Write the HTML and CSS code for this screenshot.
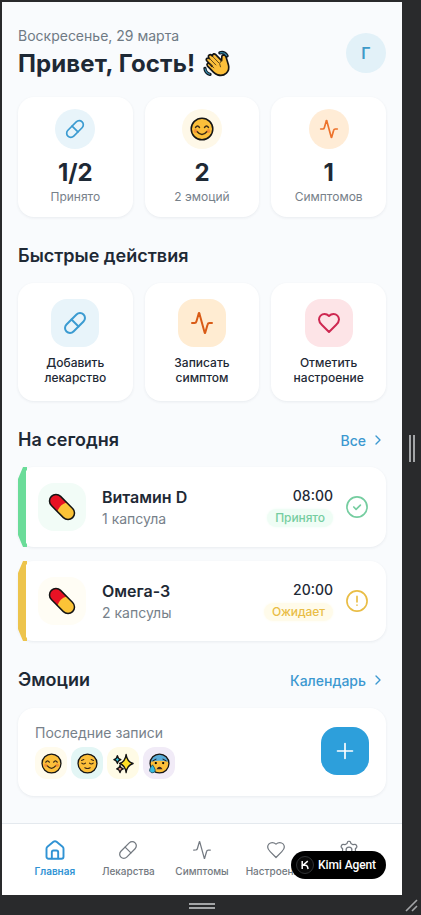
FILE: index.html
```
<!DOCTYPE html>
<html lang="ru">
<head>
<meta charset="utf-8">
<meta name="viewport" content="width=device-width, initial-scale=1">
<title>Дневник здоровья</title>
<link rel="stylesheet" href="styles.css">
</head>
<body>
<svg class="defs" aria-hidden="true">
  <symbol id="pill" viewBox="0 0 24 24"><path d="m10.5 20.5 10-10a4.95 4.95 0 1 0-7-7l-10 10a4.95 4.95 0 1 0 7 7Z"/><path d="m8.5 8.5 7 7"/></symbol>
  <symbol id="activity" viewBox="0 0 24 24"><path d="M22 12h-2.5a2 2 0 0 0-1.9 1.5l-2.4 8.3a.25.25 0 0 1-.5 0L9.3 2.2a.25.25 0 0 0-.5 0l-2.4 8.3A2 2 0 0 1 4.500 12H2"/></symbol>
  <symbol id="heart" viewBox="0 0 24 24"><path d="M19 14c1.500-1.460 3-3.210 3-5.500A5.500 5.500 0 0 0 16.500 3c-1.760 0-3 .5-4.500 2-1.500-1.500-2.740-2-4.500-2A5.500 5.500 0 0 0 2 8.500c0 2.300 1.500 4.050 3 5.500l7 7Z"/></symbol>
  <symbol id="chevron" viewBox="0 0 24 24"><path d="m9 18 6-6-6-6"/></symbol>
  <symbol id="smile" viewBox="0 0 24 24"><circle cx="12" cy="12" r="10.800" fill="#fcbf3a" stroke="#161616" stroke-width="1.500"/><path d="M5.500 10.500q2-3 4 0M14.500 10.500q2-3 4 0M7 14.500q5 6 10 0" fill="none" stroke="#3b2a16" stroke-width="1.400" stroke-linecap="round"/><circle cx="5.500" cy="14" r="1.900" fill="#f07b36" opacity=".65"/><circle cx="18.500" cy="14" r="1.900" fill="#f07b36" opacity=".65"/></symbol>
  <symbol id="capsule" viewBox="0 0 28 28"><g transform="rotate(45 14 14)"><path d="M14 7.500H5.500a6.500 6.500 0 0 0 0 13H14z" fill="#e81224"/><path d="M14 7.500h8.500a6.500 6.500 0 0 1 0 13H14q-3.500-6.500 0-13z" fill="#fbc337"/><rect x="-1" y="7.500" width="30" height="13" rx="6.500" fill="none" stroke="#141414" stroke-width="1.500"/></g></symbol>
</svg>
<div class="frame">
  <main class="screen">
    <div class="content">
      <header class="header">
        <div>
          <p class="date">Воскресенье, 29 марта</p>
          <h1 class="greeting">Привет, Гость!
            <svg class="wave" viewBox="0 0 28 28"><g stroke-linecap="round" stroke-linejoin="round"><path d="M9.500 17 3.800 11.200q-1-1.700.5-2.600 1.300-.7 2.400.4L5.800 7.800q-.8-1.600.6-2.600 1.400-.8 2.600.4l.8.8Q9.500 4.500 11 4q1.200-.2 2.200.8l6.100 6.200.2-4q.2-2 2-2 1.900.1 2.400 2.200l2.500 8.300q1.300 5-2.200 8.500-3.700 3.500-9 1.800-2.400-.8-4.400-2.800l-6.300-6.500q-1-1.500.3-2.500 1.300-.7 2.500.5z" fill="#fcbf3a" stroke="#141414" stroke-width="1.700"/><path d="m7 9 6.300 6.500M9.800 6.500l6.500 6.700M7.300 14.500l4 4M18.800 11q-3 3-.8 6.500" fill="none" stroke="#4c3717" stroke-width=".9"/><path d="M17.500 3q4.500-1.500 7.500 3" fill="none" stroke="#111b24" stroke-width="3.400"/><path d="M2 19q.5 5 5.300 6.300" fill="none" stroke="#111b24" stroke-width="3.400"/><path d="M18 3q4-1 6.500 2.600M2.200 19.500q.8 4.200 4.600 5.500" fill="none" stroke="#3487a8" stroke-width="1.200"/></g></svg>
          </h1>
        </div>
        <div class="avatar">Г</div>
      </header>

      <section class="grid stats">
        <article class="card stat"><div class="bubble blue"><svg class="icon"><use href="#pill"/></svg></div><strong>1/2</strong><span>Принято</span></article>
        <article class="card stat"><div class="bubble cream"><svg class="face"><use href="#smile"/></svg></div><strong>2</strong><span>2 эмоций</span></article>
        <article class="card stat"><div class="bubble peach"><svg class="icon"><use href="#activity"/></svg></div><strong>1</strong><span>Симптомов</span></article>
      </section>

      <div class="section-head actions-head"><h2>Быстрые действия</h2></div>
      <section class="grid actions">
        <article class="card action"><div class="tile blue"><svg class="icon"><use href="#pill"/></svg></div><span>Добавить<br>лекарство</span></article>
        <article class="card action"><div class="tile orange"><svg class="icon"><use href="#activity"/></svg></div><span>Записать<br>симптом</span></article>
        <article class="card action"><div class="tile rose"><svg class="icon"><use href="#heart"/></svg></div><span>Отметить<br>настроение</span></article>
      </section>

      <div class="section-head today-head"><h2>На сегодня</h2><a>Все <svg class="icon"><use href="#chevron"/></svg></a></div>
      <section class="meds">
        <article class="card med taken">
          <div class="med-icon"><svg><use href="#capsule"/></svg></div>
          <div class="med-info"><h3>Витамин D</h3><p>1 капсула</p></div>
          <div class="med-time"><time>08:00</time><span class="badge">Принято</span></div>
          <svg class="icon status" viewBox="0 0 24 24"><circle cx="12" cy="12" r="11"/><path d="m8.500 12 2.500 2.500 4.700-4.600"/></svg>
        </article>
        <article class="card med waiting">
          <div class="med-icon"><svg><use href="#capsule"/></svg></div>
          <div class="med-info"><h3>Омега-3</h3><p>2 капсулы</p></div>
          <div class="med-time"><time>20:00</time><span class="badge">Ожидает</span></div>
          <svg class="icon status" viewBox="0 0 24 24"><circle cx="12" cy="12" r="11"/><path d="M12 7v6M12 16.500v.1"/></svg>
        </article>
      </section>

      <div class="section-head mood-head"><h2>Эмоции</h2><a>Календарь <svg class="icon"><use href="#chevron"/></svg></a></div>
      <section class="card mood">
        <div>
          <p>Последние записи</p>
          <div class="faces">
            <span class="joy"><svg><use href="#smile"/></svg></span>
            <span class="calm"><svg viewBox="0 0 24 24"><circle cx="12" cy="12" r="10.800" fill="#fcbf3a" stroke="#161616" stroke-width="1.500"/><path d="M5.500 11.500q2 2.200 4.200 0M14.300 11.500q2 2.200 4.200 0M9 16.800q3 1.800 6 0M5.200 8.500l2.500-1M18.800 8.500l-2.500-1" fill="none" stroke="#3b2a16" stroke-width="1.300" stroke-linecap="round"/></svg></span>
            <span class="spark"><svg viewBox="0 0 24 24"><g stroke="#151515" stroke-width="1.500" stroke-linejoin="round"><path d="M15 1.500q1 8.500 8 10.500-7 2-8 10.500Q14 14 7.500 12 14 10 15 1.500z" fill="#ffdf26"/><path d="M5 3q.6 3.700 4 4.500-3.400.8-4 4.500-.6-3.700-4-4.500Q4.400 6.700 5 3z" fill="#31c5df"/><path d="M8 14q.6 3.500 3.800 4.200Q8.600 19 8 22.500q-.6-3.500-3.800-4.300Q7.400 17.500 8 14z" fill="#ed9184"/></g></svg></span>
            <span class="worry"><svg viewBox="0 0 24 24"><circle cx="12" cy="12" r="10.800" fill="#fcbf3a"/><path d="M1.500 10a10.800 10.800 0 0 1 21 0Q12 7.500 1.500 10z" fill="#59acd9"/><circle cx="12" cy="12" r="10.800" fill="none" stroke="#161616" stroke-width="1.500"/><path d="m4.500 9 3.500-2M19.500 9 16 7" stroke="#222" stroke-width="1.200" stroke-linecap="round"/><circle cx="7.800" cy="11.500" r="1.300"/><circle cx="16.200" cy="11.500" r="1.300"/><path d="M8.500 18.500q3.500-5.500 7 0z" fill="#3b2420"/><path d="M4 13.500q-4 5-3.200 7.200Q2 23 4.500 22.600q3-.6 2.600-3.200Q6.600 17 4 13.500z" fill="#35b9df" stroke="#164957" stroke-width=".9"/></svg></span>
          </div>
        </div>
        <button class="add" aria-label="Добавить"><svg class="icon" viewBox="0 0 24 24"><path d="M3 12h18M12 3v18"/></svg></button>
      </section>
    </div>

    <nav class="nav">
      <a class="active"><svg class="icon" viewBox="0 0 24 24"><path d="M1.800 10.500a3 3 0 0 1 1.100-2.300l7.200-6a3 3 0 0 1 3.800 0l7.200 6a3 3 0 0 1 1.100 2.300V20a2.500 2.500 0 0 1-2.500 2.500H4.300A2.500 2.500 0 0 1 1.800 20z"/><path d="M8.200 22v-7.500a2 2 0 0 1 2-2h3.600a2 2 0 0 1 2 2V22"/></svg><span>Главная</span></a>
      <a><svg class="icon"><use href="#pill"/></svg><span>Лекарства</span></a>
      <a><svg class="icon"><use href="#activity"/></svg><span>Симптомы</span></a>
      <a><svg class="icon"><use href="#heart"/></svg><span>Настроение</span></a>
      <a><svg class="icon" viewBox="0 0 24 24"><path d="m9.700 4.100.5-1.600A1.500 1.500 0 0 1 11.600 1.500h.8a1.500 1.500 0 0 1 1.400 1l.5 1.600 2.600 1.500 2-.4a1.500 1.500 0 0 1 1.600.7l.8 1.400a1.500 1.500 0 0 1-.2 1.700L19.700 10.500v3l1.400 1.500a1.500 1.500 0 0 1 .2 1.700l-.8 1.400a1.500 1.500 0 0 1-1.600.7l-2-.4-2.600 1.500-.5 1.600a1.500 1.500 0 0 1-1.400 1h-.8a1.500 1.500 0 0 1-1.400-1l-.5-1.600-2.600-1.500-2 .4a1.500 1.500 0 0 1-1.600-.7l-.8-1.400a1.500 1.500 0 0 1 .2-1.700l1.400-1.500v-3L2.900 9a1.500 1.500 0 0 1-.2-1.700l.8-1.400a1.500 1.500 0 0 1 1.600-.7l2 .4z"/><circle cx="12" cy="12" r="3.500"/></svg></a>
    </nav>
    <div class="agent"><svg viewBox="0 0 20 20"><circle cx="10" cy="10" r="8.500" fill="#090909" stroke="#303234"/><path d="M7.200 6v8M12.800 6.200 8 10.200h2.300q1.700 0 2.200 1.500l.6 2.300" fill="none" stroke="#fff" stroke-width="1.500"/></svg>Kimi Agent</div>
  </main>
  <div class="side-handle"><i></i><i></i></div>
  <div class="bottom-handle"><i></i><i></i></div>
  <svg class="corner" viewBox="0 0 14 14"><path d="M1 12 12 1M7 12l5-5"/></svg>
</div>
</body>
</html>
```
FILE: styles.css
```
* { box-sizing: border-box; }
body { margin: 0; font-family: Inter, sans-serif; color: #1e2935; }
h1, h2, h3, p { margin: 0; }
svg { display: block; overflow: visible; }
.defs { position: absolute; width: 0; height: 0; }
.icon { width: 20px; height: 20px; fill: none; stroke: currentColor; stroke-width: 2; stroke-linecap: round; stroke-linejoin: round; }

.frame { display: grid; grid-template: 893px 20px / 400px 19px; width: 421px; height: 915px; padding: 2px 0 0 2px; background: #292a2c; overflow: hidden; position: relative; }
.screen { position: relative; display: flex; flex-direction: column; background: #f9fbfd; overflow: hidden; }
.content { flex: 1; padding: 24px 16px 0; }

.header { display: flex; align-items: center; justify-content: space-between; height: 54px; }
.date { font-size: 14px; line-height: 20px; color: #6f7a84; }
.greeting { display: flex; align-items: center; gap: 8px; padding-top: 1px; font-size: 24px; line-height: 33px; font-weight: 700; letter-spacing: .12px; white-space: nowrap; }
.wave { width: 27px; height: 27px; }
.avatar { display: grid; place-items: center; width: 40px; height: 40px; border-radius: 50%; background: #e2f1f8; color: #3e9ac8; font-size: 16px; font-weight: 600; }

.card { background: #fff; border-radius: 16px; box-shadow: 0 1px 3px rgba(35, 55, 75, .08); }
.grid { display: grid; grid-template-columns: repeat(3, 1fr); gap: 12px; }
.stats { margin-top: 17px; }
.stat { display: flex; flex-direction: column; align-items: center; height: 120px; padding-top: 12px; }
.bubble, .tile { display: grid; place-items: center; }
.bubble { width: 40px; height: 40px; border-radius: 50%; }
.bubble .face { width: 24px; height: 24px; }
.stat strong { margin-top: 8px; font-size: 24px; line-height: 32px; font-weight: 700; }
.stat > span { font-size: 12px; line-height: 16px; color: #77818a; }
.blue { background: #e8f4fa; color: #3b9bd1; }
.cream { background: #fef8e8; }
.peach { background: #ffecd6; color: #ed722b; }
.orange { background: #ffecd2; color: #d95b16; }
.rose { background: #fde4e7; color: #ce2851; }

.section-head { display: flex; align-items: center; justify-content: space-between; height: 28px; }
.section-head h2 { font-size: 18px; line-height: 28px; font-weight: 600; }
.section-head a { display: flex; align-items: center; gap: 4px; color: #3c98d0; font-size: 14px; font-weight: 500; }
.section-head .icon { width: 16px; height: 16px; }
.actions-head { margin-top: 25px; }
.actions { margin-top: 13px; }
.action { display: flex; flex-direction: column; align-items: center; height: 118px; padding-top: 16px; text-align: center; }
.action > span { margin-top: 8px; font-size: 12px; line-height: 15px; font-weight: 500; }
.tile { width: 48px; height: 48px; border-radius: 16px; }
.tile .icon { width: 24px; height: 24px; }

.today-head { margin-top: 25px; }
.meds { display: flex; flex-direction: column; gap: 14px; margin-top: 13px; }
.med { position: relative; display: flex; align-items: center; height: 80px; padding: 0 18px 0 20px; }
.med::before { content: ""; position: absolute; left: 0; top: -1px; width: 9px; height: 82px; background: var(--edge); clip-path: polygon(0 13px, 5px 1px, 9px 1px, 9px 4px, 8px 5px, 8px 77px, 9px 78px, 9px 81px, 5px 81px, 0 69px); }
.taken { --edge: #6bdc99; --ink: #75cda0; --soft: #effdf5; }
.waiting { --edge: #edc44c; --ink: #e9bd45; --soft: #fffbea; }
.med-icon { display: grid; place-items: center; width: 48px; height: 48px; border-radius: 16px; background: var(--soft); }
.taken .med-icon { background: #f2fcf7; }
.waiting .med-icon { background: #fffdf5; }
.med-icon svg { width: 28px; height: 28px; }
.med-info { flex: 1; margin-left: 16px; }
.med-info h3 { font-size: 16px; line-height: 24px; font-weight: 600; }
.med-info p { font-size: 14px; line-height: 20px; color: #77818a; }
.med-time { display: flex; flex-direction: column; align-items: flex-end; margin-right: 13px; }
.med-time time { font-size: 14px; line-height: 22px; font-weight: 500; }
.badge { margin: 2px 0 2px; padding: 0 8px; border-radius: 10px; background: var(--soft); color: var(--ink); font-size: 12px; line-height: 18px; font-weight: 500; letter-spacing: -.08px; box-shadow: 0 0 3px var(--soft); }
.status { width: 22px; height: 22px; color: var(--ink); stroke-width: 1.8; }

.mood-head { margin-top: 25px; }
.mood { display: flex; align-items: center; justify-content: space-between; height: 88px; margin-top: 14px; padding: 0 17px 2px; }
.mood p { font-size: 14px; line-height: 20px; color: #77818a; }
.faces { display: flex; gap: 4px; margin-top: 4px; }
.faces span { display: grid; place-items: center; width: 32px; height: 32px; border-radius: 12px; }
.faces svg { width: 21px; height: 21px; }
.joy { background: #fffbed; }
.calm { background: #e3f6f5; }
.spark { background: #fffbe6; }
.worry { background: #f1ebf7; }
.add { display: grid; place-items: center; width: 48px; height: 48px; padding: 0; border: 0; border-radius: 16px; background: #2d9fdb; color: #fff; }

.nav { display: grid; grid-template-columns: repeat(5, 1fr); height: 72px; padding: 0 16px; border-top: 1px solid #e4e9ee; background: #fff; }
.nav a { display: flex; flex-direction: column; align-items: center; padding-top: 16px; color: #737980; font-size: 10px; line-height: 15px; font-weight: 500; }
.nav a span { margin-top: 4px; }
.nav .icon { stroke-width: 1.5; }
.nav .active { color: #3093d4; font-weight: 600; }
.nav .active .icon { stroke-width: 2.3; }
.agent { position: absolute; right: 16px; bottom: 16px; display: flex; align-items: center; gap: 3px; width: 95px; height: 28px; padding-left: 4px; border-radius: 14px; background: #000; color: #fff; font: 500 12px/28px Roboto, sans-serif; letter-spacing: -.1px; white-space: nowrap; }
.agent svg { width: 20px; height: 20px; }

.side-handle, .bottom-handle { display: flex; align-items: center; justify-content: center; gap: 2px; }
.side-handle i { width: 2px; height: 27px; background: #a3a5a7; }
.bottom-handle { flex-direction: column; padding-top: 1px; }
.bottom-handle i { width: 26px; height: 2px; background: #a3a5a7; }
.corner { position: absolute; right: 2px; bottom: 2px; width: 14px; height: 14px; fill: none; stroke: #a3a5a7; stroke-width: 1.6; }
```
